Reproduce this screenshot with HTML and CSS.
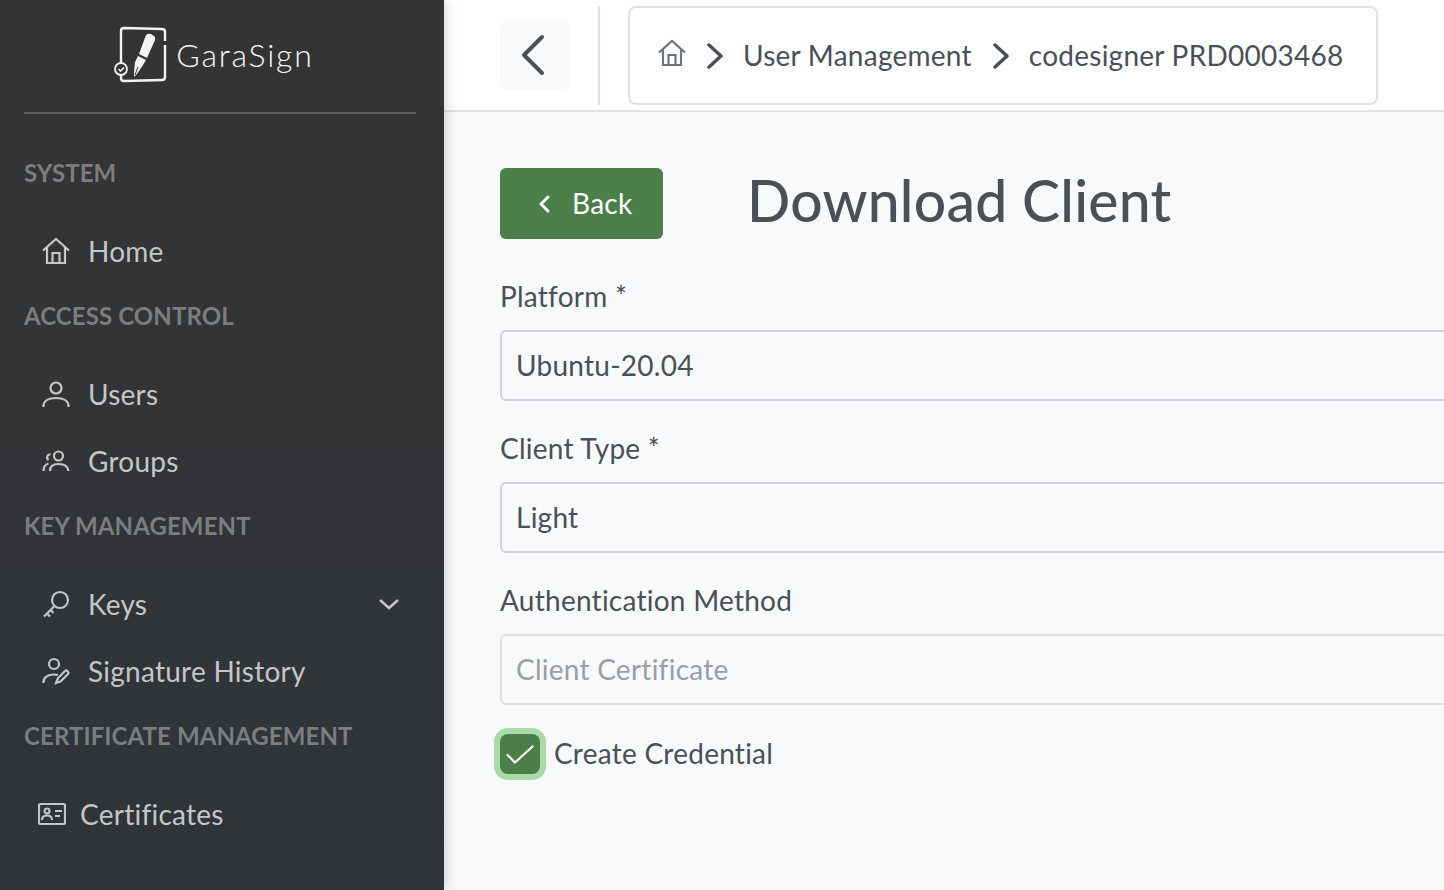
FILE: index.html
```html
<!DOCTYPE html>
<html lang="en">
<head>
    <meta charset="UTF-8">
    <title>Download Client</title>
    <link rel="stylesheet" href="styles.css">
</head>
<body>
    <div class="layout">
        <aside class="sidebar">
            <div class="brand">
                <svg class="brand-logo" viewBox="0 0 56 60" width="56" height="60">
                    <path d="M7 40V6q0-3 3-3l38 1q3 0 3 3v9M51 20v32q0 3-3 3l-38 1q-3 0-3-3v-3" fill="none" stroke="#f4f4f4" stroke-width="2.4"/>
                    <circle cx="7" cy="44" r="6" fill="#333" stroke="#f4f4f4" stroke-width="1.8"/>
                    <path d="M4.500 44l2 2 3.500-3.500" fill="none" stroke="#f4f4f4" stroke-width="1.6"/>
                    <path d="M32 10q2-2 5-1l3 2q2 2 1 4l-8 18-8-4z" fill="#f4f4f4"/>
                    <path d="M24 31l8 4-3 5-6 9-3 3 0-5 1-10z" fill="#f4f4f4"/>
                    <path d="M21 50l3-8" stroke="#333" stroke-width="1"/>
                </svg>
                <span class="brand-name">GaraSign</span>
            </div>
            <nav class="nav">
                <div class="nav-label">SYSTEM</div>
                <a class="nav-item">
                    <svg class="nav-icon" viewBox="0 0 28 28"><path d="M1 13.500L14 2l13 11.500M5 10.500V26h18V10.500M10.500 26v-10h7v10"/></svg>
                    <span>Home</span>
                </a>
                <div class="nav-label">ACCESS CONTROL</div>
                <a class="nav-item">
                    <svg class="nav-icon" viewBox="0 0 28 28"><circle cx="14" cy="8" r="5.500"/><path d="M1.500 27v-1c0-5 5-8 12.500-8s12.500 3 12.500 8v1"/></svg>
                    <span>Users</span>
                </a>
                <a class="nav-item">
                    <svg class="nav-icon" viewBox="0 0 28 28"><circle cx="16.500" cy="9" r="4.500"/><path d="M8 24c0-5 3.500-7 8.500-7s9.500 2 10 7M8.500 7.500a3 3 0 0 0-2 5.500M1.500 24c0-4 1.500-6.500 5-7.500"/></svg>
                    <span>Groups</span>
                </a>
                <div class="nav-label">KEY MANAGEMENT</div>
                <a class="nav-item">
                    <svg class="nav-icon" viewBox="0 0 28 28"><circle cx="18" cy="10" r="8"/><path d="M12.500 16L2 26.500M5 23.500l3 3M8.500 20l3 3"/></svg>
                    <span>Keys</span>
                    <svg class="nav-caret" viewBox="0 0 22 12"><path d="M2 2l9 8 9-8"/></svg>
                </a>
                <a class="nav-item">
                    <svg class="nav-icon" viewBox="0 0 28 28"><circle cx="12" cy="7" r="5"/><path d="M1.500 26v-1c0-5 5-7.500 10.500-7.500 1.500 0 3 .2 4 .5M14 26l2-5 7-7c1.500-1.500 4.500 1 3 3l-7.500 7.500z"/></svg>
                    <span>Signature History</span>
                </a>
                <div class="nav-label">CERTIFICATE MANAGEMENT</div>
                <a class="nav-item nav-item-cert">
                    <svg class="nav-icon" viewBox="0 0 28 22"><rect x="1" y="1" width="26" height="20" rx="1.500"/><circle cx="9" cy="8" r="2.500"/><path d="M4 17c0-3 2-4.500 5-4.500s5 1.500 5 4.500M17 8h7M17 13h5"/></svg>
                    <span>Certificates</span>
                </a>
            </nav>
        </aside>
        <div class="content">
            <header class="topbar">
                <button class="toggle">
                    <svg viewBox="0 0 26 42" width="26" height="42"><path d="M22 3L4 21l18 18"/></svg>
                </button>
                <div class="divider"></div>
                <div class="crumbs">
                    <svg class="crumb-home" viewBox="0 0 28 28"><path d="M1 13.500L14 2l13 11.500M5 10.500V26h18V10.500M10.500 26v-10h7v10"/></svg>
                    <svg class="crumb-sep" viewBox="0 0 16 26"><path d="M2 2l12 11L2 24"/></svg>
                    <span>User Management</span>
                    <svg class="crumb-sep" viewBox="0 0 16 26"><path d="M2 2l12 11L2 24"/></svg>
                    <span>codesigner PRD0003468</span>
                </div>
            </header>
            <main class="page">
                <div class="page-head">
                    <button class="btn-back">
                        <svg viewBox="0 0 14 20" width="14" height="20"><path d="M11 3L4 10l7 7"/></svg>
                        <span>Back</span>
                    </button>
                    <h1>Download Client</h1>
                </div>
                <form class="form">
                    <label class="field-label">Platform *</label>
                    <div class="input">Ubuntu-20.04</div>
                    <label class="field-label">Client Type *</label>
                    <div class="input">Light</div>
                    <label class="field-label">Authentication Method</label>
                    <div class="input input-disabled">Client Certificate</div>
                    <div class="check-row">
                        <span class="check">
                            <svg viewBox="0 0 28 19" width="28" height="19"><path d="M1.500 10l7.500 7.500L26.500 1.500"/></svg>
                        </span>
                        <span>Create Credential</span>
                    </div>
                </form>
            </main>
        </div>
    </div>
</body>
</html>
```

FILE: styles.css
```css
* {
    box-sizing: border-box;
}
html, body {
    margin: 0;
    height: 100%;
    overflow: hidden;
}
body {
    font-family: "Lato", "Open Sans", sans-serif;
    font-size: 28px;
    letter-spacing: 0.25px;
    color: #495057;
}
.layout {
    display: flex;
    height: 890px;
}

/* sidebar */
.sidebar {
    width: 444px;
    flex-shrink: 0;
    background: linear-gradient(#343434, #303439);
    padding: 0 28px 0 24px;
    box-shadow: 0 0 14px rgba(0, 0, 0, 0.2);
    position: relative;
}
.brand {
    height: 114px;
    border-bottom: 2px solid #5e5e5e;
    display: flex;
    align-items: center;
    justify-content: center;
    gap: 6px;
    padding: 0 12px 4px 0;
}
.brand-logo {
    margin-top: 2px;
}
.brand-name {
    font-size: 32px;
    font-weight: 300;
    color: #f8f8f8;
    letter-spacing: 1.800px;
}
.nav {
    padding-top: 28px;
}
.nav-label {
    height: 60px;
    line-height: 62px;
    margin-bottom: 17px;
    font-size: 24px;
    font-weight: 700;
    letter-spacing: 0.1px;
    color: #7b7d7f;
    white-space: nowrap;
}
.nav-item {
    height: 66px;
    margin-bottom: 1px;
    padding-bottom: 2px;
    display: flex;
    align-items: center;
    gap: 18px;
    padding-left: 18px;
    color: #c4c6c8;
}
.nav-item + .nav-label {
    margin-top: -1px;
}
.nav-icon {
    width: 28px;
    height: 28px;
    fill: none;
    stroke: #c4c6c8;
    stroke-width: 2.200;
    flex-shrink: 0;
}
.nav-caret {
    width: 22px;
    height: 12px;
    margin-left: auto;
    margin-right: 16px;
    fill: none;
    stroke: #c4c6c8;
    stroke-width: 2.500;
}
.nav-item-cert {
    padding-left: 14px;
    gap: 14px;
}

/* top bar */
.content {
    flex: 1;
    min-width: 0;
    background: #f8f9fa;
    overflow: hidden;
}
.topbar {
    height: 112px;
    background: #fff;
    border-bottom: 2px solid #dee2e6;
    display: flex;
    align-items: flex-start;
    padding: 6px 0 0 56px;
}
.toggle {
    width: 70px;
    height: 70px;
    margin-top: 14px;
    padding: 0;
    border: none;
    border-radius: 8px;
    background: #f8f9fa;
    display: flex;
    align-items: center;
    justify-content: center;
}
.toggle svg {
    fill: none;
    stroke: #495057;
    stroke-width: 4;
    stroke-linecap: round;
    stroke-linejoin: round;
    margin-left: -4px;
}
.divider {
    width: 2px;
    height: 99px;
    margin: 0 28px;
    background: #dee2e6;
}
.crumbs {
    width: 750px;
    height: 99px;
    border: 2px solid #dee2e6;
    border-radius: 8px;
    display: flex;
    align-items: center;
    padding: 0 0 0 28px;
    white-space: nowrap;
}
.crumbs span {
    margin-top: -2px;
}
.crumb-home {
    width: 28px;
    height: 28px;
    margin-top: -6px;
    fill: none;
    stroke: #6c757d;
    stroke-width: 2.200;
}
.crumb-sep {
    width: 16px;
    height: 26px;
    margin: 0 20px 0 21px;
    fill: none;
    stroke: #495057;
    stroke-width: 3.500;
    stroke-linecap: round;
    stroke-linejoin: round;
}

/* form */
.page {
    padding: 56px 0 0 56px;
}
.page-head {
    display: flex;
    align-items: flex-start;
    gap: 84px;
    height: 71px;
}
.btn-back {
    width: 163px;
    height: 71px;
    border: none;
    border-radius: 6px;
    background: #4a7f48;
    color: #fff;
    font: inherit;
    letter-spacing: 0.25px;
    display: flex;
    align-items: center;
    padding: 0 0 0 37px;
    gap: 21px;
}
.btn-back span {
    margin-top: -2px;
}
.btn-back svg {
    fill: none;
    stroke: #fff;
    stroke-width: 3;
    stroke-linecap: round;
    stroke-linejoin: round;
}
h1 {
    margin: 0;
    font-size: 57px;
    font-weight: 500;
    line-height: 64px;
    color: #495057;
}
.form {
    width: 1100px;
    padding-top: 21px;
}
.field-label {
    display: block;
    height: 70px;
    line-height: 72px;
}
.input {
    height: 71px;
    margin-bottom: 11px;
    border: 2px solid #ced4da;
    border-radius: 6px;
    padding: 0 14px;
    line-height: 66px;
}
.input-disabled {
    color: #9a9fa5;
    border-color: #dee2e6;
}
.check-row {
    display: flex;
    align-items: center;
    gap: 14px;
    margin-top: 28px;
}
.check-row > span:last-child {
    margin-top: -2px;
}
.check {
    width: 40px;
    height: 40px;
    margin-top: 1px;
    border-radius: 8px;
    background: #4a7f48;
    box-shadow: 0 0 0 6px #a9dba9;
    display: flex;
    align-items: center;
    justify-content: center;
}
.check svg {
    fill: none;
    stroke: #fff;
    stroke-width: 2.200;
    stroke-linecap: round;
    stroke-linejoin: round;
}
```
